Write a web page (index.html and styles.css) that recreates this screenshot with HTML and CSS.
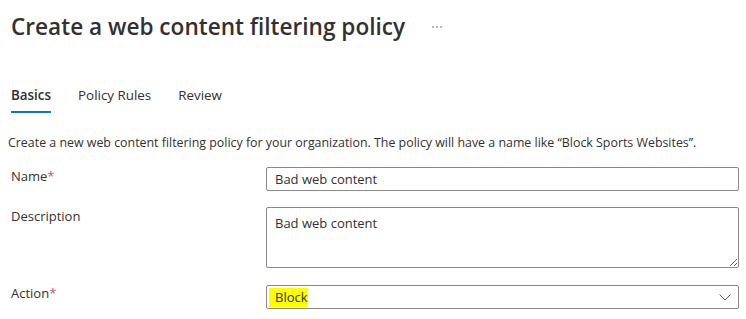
FILE: index.html
```html
<!DOCTYPE html>
<html lang="en">

<head>
    <meta charset="UTF-8">
    <title>Create a web content filtering policy</title>
    <link rel="stylesheet" href="styles.css">
</head>

<body>
    <div class="page">
        <div class="head">
            <h1>Create a web content filtering policy</h1>
            <svg class="more" width="10" height="4" viewBox="0 0 10 4">
                <circle cx="1" cy="2" r="0.8" fill="#605e5c"/>
                <circle cx="5" cy="2" r="0.8" fill="#605e5c"/>
                <circle cx="9" cy="2" r="0.8" fill="#605e5c"/>
            </svg>
        </div>

        <!-- wizard steps -->
        <div class="tabs">
            <span class="tab active">Basics</span>
            <span class="tab">Policy Rules</span>
            <span class="tab">Review</span>
        </div>

        <p class="intro">Create a new web content filtering policy for your organization. The policy will have a name like “Block Sports Websites”.</p>

        <form class="fields" action="#">
            <label class="lbl" for="name">Name<span class="req">*</span></label>
            <input id="name" class="box" type="text" value="Bad web content">

            <label class="lbl" for="desc">Description</label>
            <textarea id="desc" class="box area">Bad web content</textarea>

            <label class="lbl" for="action">Action<span class="req">*</span></label>
            <div id="action" class="box select">
                <span class="mark">Block</span>
                <svg class="chev" width="12" height="7" viewBox="0 0 12 7">
                    <path d="M0.5 0.5 L6 6 L11.5 0.5" fill="none" stroke="#605e5c" stroke-width="1"/>
                </svg>
            </div>
        </form>
    </div>
</body>

</html>
```

FILE: styles.css
```css
* {
    box-sizing: border-box;
}

body {
    margin: 0;
    background: #fff;
    color: #323130;
    font-family: "Open Sans", "Noto Sans", sans-serif;
    font-size: 13px;
}

.page {
    padding: 11px 7px 0 11px;
}

.head {
    display: flex;
    align-items: center;
    height: 32px;
}

h1 {
    margin: 0;
    font-size: 22.6px;
    font-weight: 600;
    line-height: 32px;
}

.more {
    margin-left: 27px;
}

.tabs {
    display: flex;
    gap: 27px;
    margin-top: 42px;
}

.tab {
    padding-bottom: 6px;
    border-bottom: 2px solid transparent;
    font-size: 13.4px;
    line-height: 20px;
}

.tab.active {
    font-weight: 600;
    border-bottom-color: #0078d4;
}

.intro {
    margin: 21px 0 0 -3px;
    font-size: 12.4px;
    line-height: 18px;
}

.fields {
    display: grid;
    grid-template-columns: 255px 1fr;
    row-gap: 16px;
    margin-top: 15px;
}

.lbl {
    font-size: 13px;
    line-height: 18px;
}

.req {
    color: #d0546a;
}

.box {
    height: 24px;
    margin: 0;
    padding: 0 8px;
    border: 1px solid #8a8886;
    border-radius: 2px;
    background: #fff;
    color: #323130;
    font-family: inherit;
    font-size: 13px;
}

.area {
    height: 61px;
    padding-top: 6px;
    resize: vertical;
}

.select {
    display: flex;
    align-items: center;
    justify-content: space-between;
    height: 24px;
    padding: 0 7px 0 2px;
    margin-top: 1px;
}

.mark {
    padding: 0 0 0 6px;
    background: #ffff00;
    line-height: 19px;
}
```
